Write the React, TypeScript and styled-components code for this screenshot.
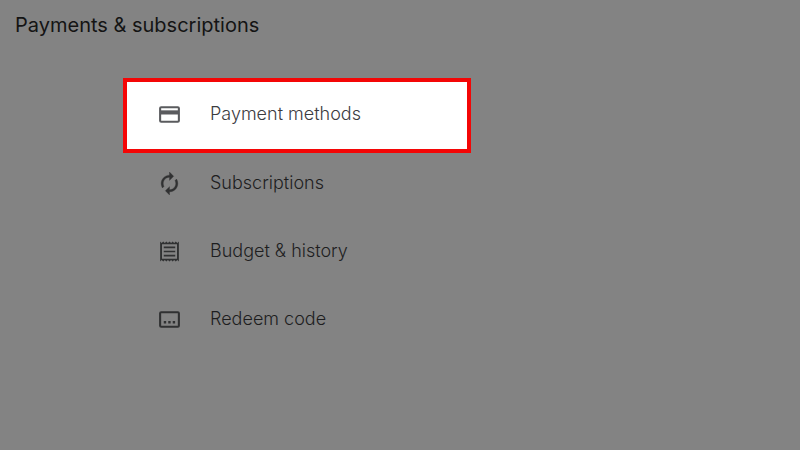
import React from 'react';
import styled, { createGlobalStyle } from 'styled-components';

const GlobalStyle = createGlobalStyle`
  * { box-sizing: border-box; }
  body {
    margin: 0;
    background: #838383;
    font-family: Inter, Roboto, sans-serif;
  }
`;

const Page = styled.main`
  min-height: 100vh;
  padding: 12px 15px;
`;

const Title = styled.h1`
  margin: 0;
  font-size: 20px;
  line-height: 26px;
  font-weight: 400;
  color: #141414;
`;

const Menu = styled.nav`
  display: flex;
  flex-direction: column;
  gap: 8px;
  max-width: 456px;
  margin-top: 40px;
  padding-left: 108px;
`;

const MenuLink = styled.a<{ $highlighted?: boolean }>`
  display: flex;
  align-items: center;
  gap: 28px;
  height: ${(p) => (p.$highlighted ? '75px' : '60px')};
  margin-bottom: ${(p) => (p.$highlighted ? '-8px' : '0')};
  padding: ${(p) => (p.$highlighted ? '0 30px 3px' : '0 34px')};
  border: ${(p) => (p.$highlighted ? '4px solid #f40606' : 'none')};
  background: ${(p) => (p.$highlighted ? '#ffffff' : 'transparent')};
  color: ${(p) => (p.$highlighted ? '#3c3c3f' : '#1e1e1f')};
  font-size: 18px;
  line-height: 24px;
  font-weight: 300;
  text-decoration: none;
`;

const Icon = styled.svg<{ $highlighted?: boolean }>`
  flex: none;
  width: 25px;
  height: 25px;
  color: ${(p) => (p.$highlighted ? '#5a5b5e' : '#303132')};
`;

const CardShape = () => (
  <g fill="none" stroke="currentColor" strokeWidth="2">
    <rect x="3" y="5" width="18" height="14" rx="1" />
    <path d="M3 10H21" strokeWidth="4" />
  </g>
);

const RenewShape = () => (
  <path
    fill="currentColor"
    stroke="currentColor"
    strokeWidth="0.3"
    d="M12 6v3l4-4-4-4v3c-4.42 0-8 3.58-8 8 0 1.57.46 3.03 1.24 4.26L6.7 14.8A5.9 5.9 0 0 1 6 12c0-3.31 2.69-6 6-6zm6.76 1.74L17.3 9.2c.44.84.7 1.79.7 2.8 0 3.31-2.69 6-6 6v-3l-4 4 4 4v-3c4.42 0 8-3.58 8-8 0-1.57-.46-3.03-1.24-4.26z"
  />
);

const ReceiptShape = () => (
  <path
    fill="currentColor"
    fillRule="evenodd"
    d="M3 2.5l1.5 1.3L6 2.5l1.5 1.3L9 2.5l1.5 1.3L12 2.5l1.5 1.3L15 2.5l1.5 1.3L18 2.5l1.5 1.3L21 2.5v19l-1.5-1.3-1.5 1.3-1.5-1.3-1.5 1.3-1.5-1.3-1.5 1.3-1.5-1.3L9 21.5l-1.5-1.3L6 21.5l-1.5-1.3L3 21.5zM4.8 5v14h14.4V5zM6.5 7.2h11v1.6h-11zM6.5 11.2h11v1.6h-11zM6.5 15.2h11v1.6h-11z"
  />
);

const CodeShape = () => (
  <>
    <rect x="3" y="5" width="18" height="14" rx="1" fill="none" stroke="currentColor" strokeWidth="2" />
    <path fill="currentColor" d="M6.5 13.5h2.3v2.3H6.5zM10.8 13.5h2.3v2.3h-2.3zM15.1 13.5h2.3v2.3h-2.3z" />
  </>
);

const items = [
  { label: 'Payment methods', Shape: CardShape, highlighted: true },
  { label: 'Subscriptions', Shape: RenewShape },
  { label: 'Budget & history', Shape: ReceiptShape },
  { label: 'Redeem code', Shape: CodeShape },
];

export default function App() {
  return (
    <>
      <GlobalStyle />
      <Page>
        <Title>Payments &amp; subscriptions</Title>
        <Menu aria-label="Payments and subscriptions">
          {items.map(({ label, Shape, highlighted }) => (
            <MenuLink key={label} href="#" $highlighted={highlighted}>
              <Icon viewBox="0 0 24 24" aria-hidden="true" $highlighted={highlighted}>
                <Shape />
              </Icon>
              {label}
            </MenuLink>
          ))}
        </Menu>
      </Page>
    </>
  );
}
